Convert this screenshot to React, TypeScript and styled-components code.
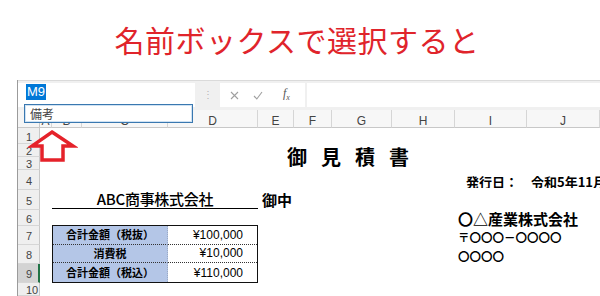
import styled, { createGlobalStyle } from "styled-components";

const GlobalStyle = createGlobalStyle`
  html, body {
    margin: 0;
    padding: 0;
    background: #fff;
  }
  body {
    width: 600px;
    height: 296px;
    overflow: hidden;
    font-family: "Noto Sans CJK JP", sans-serif;
  }
`;

const Page = styled.div`
  width: 600px;
  height: 296px;
  display: flex;
  flex-direction: column;
  overflow: hidden;
`;

const Caption = styled.h1`
  margin: 0;
  height: 80px;
  display: flex;
  align-items: center;
  justify-content: center;
  padding: 0 6px 3px 0;
  box-sizing: border-box;
  font: 400 30px/1 "Noto Sans CJK JP", sans-serif;
  letter-spacing: 0.5px;
  color: #e0242b;
`;

const Excel = styled.div`
  flex: 1;
  min-height: 0;
  margin-left: 17px;
  border-left: 1px solid #9b9b9b;
  display: flex;
  flex-direction: column;
  position: relative;
`;

const FormulaBar = styled.div`
  height: 30px;
  box-sizing: border-box;
  background: #f0f0f0;
  border-top: 1px solid #dadada;
  padding: 2px 0 3px;
  display: flex;
`;

const NameBox = styled.div`
  width: 177px;
  background: #fff;
  position: relative;
  display: flex;
  align-items: flex-start;
  padding: 1px 0 0 8px;
  box-sizing: border-box;
`;

const Selected = styled.span`
  background: #0078d7;
  color: #fff;
  font: 13px/16px "Liberation Sans", sans-serif;
  padding: 0 1px;
`;

const Dropdown = styled.div`
  position: absolute;
  left: 6px;
  top: 21px;
  width: 169px;
  height: 19px;
  box-sizing: border-box;
  border: 1px solid #3a78b0;
  box-shadow: inset 0 0 0 1px #cfe2f3;
  background: #fff;
  z-index: 3;
  padding-left: 5px;
  display: flex;
  align-items: center;
  font: 12px/1 "Noto Sans CJK JP", sans-serif;
  color: #444;
`;

const Grip = styled.div`
  width: 25px;
  display: flex;
  align-items: center;
  justify-content: center;
  color: #b5b5b5;
  font: 10px/1 "Liberation Sans", sans-serif;
`;

const FxButtons = styled.div`
  width: 85px;
  background: #fff;
  display: flex;
  align-items: center;
  padding-left: 10px;
  gap: 14px;
  box-sizing: border-box;
`;

const FxLabel = styled.span`
  font: italic 12px/1 "Liberation Serif", serif;
  color: #555;
  margin-left: 6px;

  sub {
    font-size: 8px;
  }
`;

const FormulaInput = styled.div`
  flex: 1;
  margin-left: 2px;
  background: #fff;
`;

const Sheet = styled.div`
  flex: 1;
  min-height: 0;
  position: relative;
  display: grid;
  grid-template-columns: 22px 12px 30px 86px 90px 36px 38px 60px 63px 72px 1fr;
  grid-template-rows: 18px 16px 13px 13px 20px 20px 16px 19px 19px 19px 1fr;
  background: #fff;
  color: #000;
`;

const Corner = styled.div`
  grid-column: 1;
  grid-row: 1;
  background: #f5f5f5;
  border-right: 1px solid #c8c8c8;
  border-bottom: 1px solid #c8c8c8;
`;

const ColHeader = styled.div<{ $col: number }>`
  grid-column: ${(p) => p.$col};
  grid-row: 1;
  background: #f7f7f7;
  border-right: 1px solid #d6d6d6;
  border-bottom: 1px solid #c8c8c8;
  display: flex;
  justify-content: center;
  align-items: center;
  padding-top: 5px;
  font: 12px/1 "Liberation Sans", sans-serif;
  color: #444;
  overflow: hidden;
`;

const RowHeader = styled.div<{ $row: number; $active?: boolean }>`
  grid-column: 1;
  grid-row: ${(p) => p.$row};
  background: ${(p) => (p.$active ? "#d3d3d3" : "#efefef")};
  border-bottom: 1px solid #d6d6d6;
  border-right: ${(p) => (p.$active ? "2px solid #217346" : "1px solid #c8c8c8")};
  display: flex;
  align-items: center;
  padding: 3px 0 0 8px;
  box-sizing: border-box;
  font: 11px/1 "Liberation Sans", sans-serif;
  color: #444;
  overflow: hidden;
`;

const Title = styled.div`
  grid-column: 6 / 11;
  grid-row: 3 / 5;
  align-self: center;
  padding-left: 29px;
  font: 700 20px/1 "Noto Sans CJK JP", sans-serif;
  letter-spacing: 14px;
  white-space: nowrap;
`;

const IssueDate = styled.div`
  grid-column: 10 / 12;
  grid-row: 5;
  align-self: center;
  padding: 3px 0 0 11px;
  font: 700 13px/1 "Noto Sans CJK JP", sans-serif;
  white-space: nowrap;
  overflow: hidden;
`;

const Client = styled.div`
  grid-column: 3 / 6;
  grid-row: 6;
  align-self: start;
  height: 19px;
  box-sizing: border-box;
  border-bottom: 1px solid #000;
  text-align: center;
  font: 500 15px/18px "Noto Sans CJK JP", sans-serif;
  letter-spacing: -0.3px;
`;

const Onchu = styled.div`
  grid-column: 6 / 8;
  grid-row: 6;
  padding-left: 4px;
  font: 700 15px/19px "Noto Sans CJK JP", sans-serif;
`;

const Company = styled.div`
  grid-column: 10 / 12;
  grid-row: 7;
  padding-left: 3px;
  align-self: center;
  font: 700 15px/1 "Noto Sans CJK JP", sans-serif;
  white-space: nowrap;
`;

const AddressLine = styled.div<{ $row: number }>`
  grid-column: 10 / 12;
  grid-row: ${(p) => p.$row};
  padding: 4px 0 0 3px;
  font: 600 11.5px/1 "Noto Sans CJK JP", sans-serif;
  white-space: nowrap;
  align-self: center;
`;

const Summary = styled.div`
  grid-column: 3 / 6;
  grid-row: 8 / 11;
  margin-top: -1px;
  display: grid;
  grid-template-columns: 115px 1fr;
  grid-template-rows: repeat(3, 1fr);
  border: 1px solid #111;
`;

const SummaryLabel = styled.div<{ $last?: boolean }>`
  background: #b4c6e7;
  border-bottom: ${(p) => (p.$last ? "none" : "1px dotted #333")};
  border-right: 1px dotted #9aa9c4;
  display: flex;
  align-items: center;
  justify-content: center;
  font: 700 11px/1 "Noto Sans CJK JP", sans-serif;
`;

const SummaryValue = styled.div<{ $last?: boolean }>`
  border-bottom: ${(p) => (p.$last ? "none" : "1px dotted #333")};
  display: flex;
  align-items: center;
  justify-content: flex-end;
  padding-right: 14px;
  font: 12px/1 "Liberation Sans", "Noto Sans CJK JP", sans-serif;
`;

const Arrow = styled.svg`
  position: absolute;
  left: 10px;
  top: 18px;
  z-index: 2;
`;

const columns = ["A", "B", "C", "D", "E", "F", "G", "H", "I", "J"];
const rows = [1, 2, 3, 4, 5, 6, 7, 8, 9, 10];

const summary = [
  { label: "合計金額（税抜）", value: "¥100,000" },
  { label: "消費税", value: "¥10,000" },
  { label: "合計金額（税込）", value: "¥110,000" },
];

export default function App() {
  return (
    <Page>
      <GlobalStyle />
      <Caption>名前ボックスで選択すると</Caption>
      <Excel>
        <FormulaBar>
          <NameBox>
            <Selected>M9</Selected>
            <Dropdown>備考</Dropdown>
          </NameBox>
          <Grip>⋮</Grip>
          <FxButtons>
            <svg width="9" height="9" viewBox="0 0 9 9">
              <path d="M1 1L8 8M8 1L1 8" stroke="#a0a0a0" strokeWidth="1.1" fill="none" />
            </svg>
            <svg width="10" height="9" viewBox="0 0 10 9">
              <path d="M1 5L3.8 8L9 1" stroke="#a0a0a0" strokeWidth="1.1" fill="none" />
            </svg>
            <FxLabel>
              f<sub>x</sub>
            </FxLabel>
          </FxButtons>
          <FormulaInput />
        </FormulaBar>
        <Sheet>
          <Corner />
          {columns.map((c, i) => (
            <ColHeader key={c} $col={i + 2}>
              {c}
            </ColHeader>
          ))}
          {rows.map((r) => (
            <RowHeader key={r} $row={r + 1} $active={r === 9}>
              {r}
            </RowHeader>
          ))}

          <Title>御見積書</Title>
          <IssueDate>発行日：　令和5年11月1日</IssueDate>
          <Client>ABC商事株式会社</Client>
          <Onchu>御中</Onchu>
          <Company>〇△産業株式会社</Company>
          <AddressLine $row={8}>〒〇〇〇－〇〇〇〇</AddressLine>
          <AddressLine $row={9}>〇〇〇〇</AddressLine>

          <Summary>
            {summary.map((s, i) => [
              <SummaryLabel key={s.label} $last={i === summary.length - 1}>
                {s.label}
              </SummaryLabel>,
              <SummaryValue key={s.value} $last={i === summary.length - 1}>
                {s.value}
              </SummaryValue>,
            ])}
          </Summary>

          <Arrow width="50" height="36" viewBox="0 0 50 36">
            <path
              d="M24 4L45 18L35 18L35 32L14 32L14 18L4 18Z"
              fill="#fff"
              stroke="#e5222a"
              strokeWidth="3.5"
              strokeLinejoin="miter"
            />
          </Arrow>
        </Sheet>
      </Excel>
    </Page>
  );
}
